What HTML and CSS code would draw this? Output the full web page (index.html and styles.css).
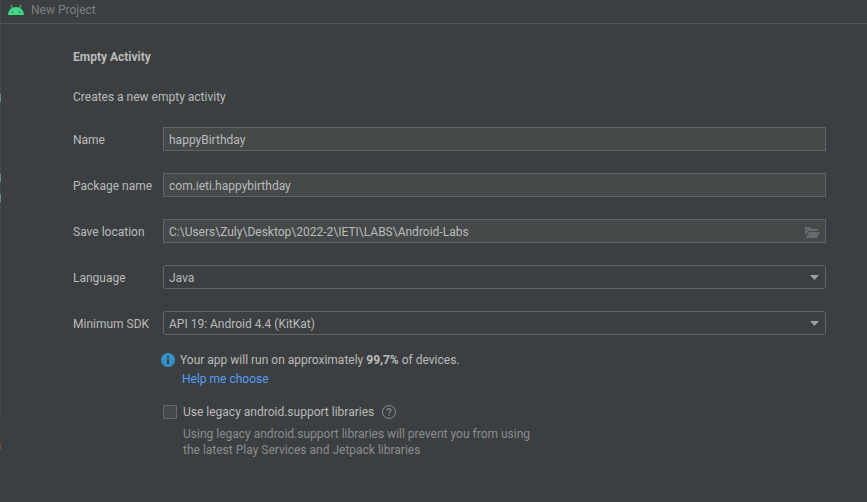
FILE: index.html
```html
<!DOCTYPE html>
<html lang="en">
<head>
<meta charset="utf-8">
<title>New Project</title>
<link rel="stylesheet" href="styles.css">
</head>
<body>
<header class="titlebar">
  <svg class="logo" width="16" height="10" viewBox="0 0 16 10" aria-hidden="true">
    <path d="M0 10C.2 6.900 1.700 4.500 4 3.100L2.300.600 3.200 0 4.900 2.700Q8 1.300 11.100 2.700L12.800 0 13.700.600 12 3.100C14.300 4.500 15.800 6.900 16 10Z" fill="#3ddc84"/>
    <circle cx="4.500" cy="7" r=".7" fill="#3c3f41"/>
    <circle cx="11.500" cy="7" r=".7" fill="#3c3f41"/>
  </svg>
  <span>New Project</span>
</header>
<main class="content">
  <h1 class="heading">Empty Activity</h1>
  <p class="intro">Creates a new empty activity</p>
  <form class="form">
    <label class="label" for="name">Name</label>
    <input class="field" id="name" type="text" value="happyBirthday">

    <label class="label" for="package">Package name</label>
    <input class="field" id="package" type="text" value="com.ieti.happybirthday">

    <label class="label" for="location">Save location</label>
    <div class="field path">
      <input class="path-input" id="location" type="text" value="C:\Users\Zuly\Desktop\2022-2\IETI\LABS\Android-Labs">
      <button class="browse" type="button" aria-label="Browse">
        <svg width="15" height="12" viewBox="0 0 15 12" aria-hidden="true">
          <path d="M0 10V1H5L7 3H13V5H3.500Z" fill="#646a6d"/>
          <path d="M4 6H15L12 12H1Z" fill="#646a6d"/>
        </svg>
      </button>
    </div>

    <label class="label" for="language">Language</label>
    <div class="combo">
      <select class="field select" id="language"><option>Java</option><option>Kotlin</option></select>
      <svg class="arrow" width="9" height="5" viewBox="0 0 9 5" aria-hidden="true"><path d="M0 0H9L4.500 5Z" fill="#9da0a2"/></svg>
    </div>

    <label class="label" for="sdk">Minimum SDK</label>
    <div class="combo">
      <select class="field select" id="sdk"><option>API 19: Android 4.4 (KitKat)</option></select>
      <svg class="arrow" width="9" height="5" viewBox="0 0 9 5" aria-hidden="true"><path d="M0 0H9L4.500 5Z" fill="#9da0a2"/></svg>
    </div>

    <div class="notes">
      <div class="info">
        <svg class="info-icon" width="14" height="14" viewBox="0 0 14 14" aria-hidden="true">
          <circle cx="7" cy="7" r="7" fill="#3592c4"/>
          <path d="M6 3H8V5H6ZM6 6H8V11H6Z" fill="#3c3f41"/>
        </svg>
        <p>Your app will run on approximately <b>99,7%</b> of devices.</p>
      </div>
      <a class="link" href="#choose">Help me choose</a>
      <div class="legacy">
        <input class="check" id="legacy" type="checkbox">
        <label for="legacy">Use legacy android.support libraries</label>
        <button class="help" type="button" aria-label="Help">
          <svg width="14" height="14" viewBox="0 0 14 14" fill="none" stroke="#8b8e90" aria-hidden="true">
            <circle cx="7" cy="7" r="6.500"/>
            <path d="M5 5.500C5 2.900 9 2.900 9 5.500C9 6.900 7 6.900 7 8.500M7 9.600V11" stroke-width="1.200"/>
          </svg>
        </button>
      </div>
      <p class="hint">Using legacy android.support libraries will prevent you from using<br>the latest Play Services and Jetpack libraries</p>
    </div>
  </form>
</main>
</body>
</html>
```
FILE: styles.css
```css
* {
  box-sizing: border-box;
}

body {
  margin: 0;
  min-height: 100vh;
  padding-left: 1px;
  /* sliver of the window behind, along the left edge */
  background: #3c3f41 linear-gradient(
    #484b4d 94px, #6f8b7c 94px 102px, #484b4d 102px 174px,
    #6f8b7c 174px 182px, #484b4d 182px 194px, #6f8b7c 194px 202px,
    #484b4d 202px 414px, #3c3f41 414px 444px, #70503f 444px 450px,
    #3c3f41 450px 484px, #70553a 484px 485px, #3c3f41 485px 489px,
    #70553a 489px 490px, #3c3f41 490px) 0 0 / 1px 100% no-repeat;
  color: #bbbbbb;
  font: 12px/16px Roboto, "Open Sans", sans-serif;
}

h1,
p {
  margin: 0;
  font-size: 12px;
}

.titlebar {
  display: flex;
  align-items: center;
  gap: 7px;
  height: 24px;
  padding: 0 7px 4px;
  border-bottom: 1px solid #515456;
  color: #7c7e80;
}

.content {
  padding: 25px 41px 40px 72px;
}

.intro {
  margin-top: 24px;
}

.form {
  display: grid;
  grid-template-columns: 78px minmax(0, 1fr);
  column-gap: 12px;
  row-gap: 22px;
  align-items: center;
  margin-top: 22px;
  white-space: nowrap;
}

.label {
  padding-top: 2px;
}

.field {
  width: 100%;
  height: 24px;
  padding: 2px 5px 0;
  border: 1px solid #646464;
  border-radius: 0;
  outline: 0;
  background: #45494a;
  color: #bbbbbb;
  font: inherit;
}

.path {
  display: flex;
  align-items: center;
}

.path-input {
  flex: 1;
  min-width: 0;
  padding: 0;
  border: 0;
  outline: 0;
  background: none;
  color: inherit;
  font: inherit;
}

.browse,
.help {
  display: flex;
  padding: 0;
  border: 0;
  background: none;
}

.combo {
  display: grid;
  align-items: center;
}

.combo > * {
  grid-area: 1 / 1;
}

.select {
  appearance: none;
  border-radius: 3px;
  background: #3c3f41;
}

.arrow {
  justify-self: end;
  margin-right: 7px;
  pointer-events: none;
}

.notes {
  grid-column: 2;
  margin-top: -5px;
}

.info {
  display: flex;
  align-items: center;
  gap: 5px;
  margin-left: -2px;
}

.link {
  display: block;
  margin: 3px 0 0 19px;
  color: #589df6;
  text-decoration: none;
}

.legacy {
  display: flex;
  align-items: center;
  margin-top: 17px;
}

.check {
  appearance: none;
  width: 14px;
  height: 14px;
  margin: 0 6px 0 0;
  border: 1px solid #6b6b6b;
  border-radius: 1px;
  background: #43494a;
}

.help {
  margin-left: 8px;
}

.hint {
  margin: 6px 0 0 20px;
  color: #8c8c8c;
}
```
